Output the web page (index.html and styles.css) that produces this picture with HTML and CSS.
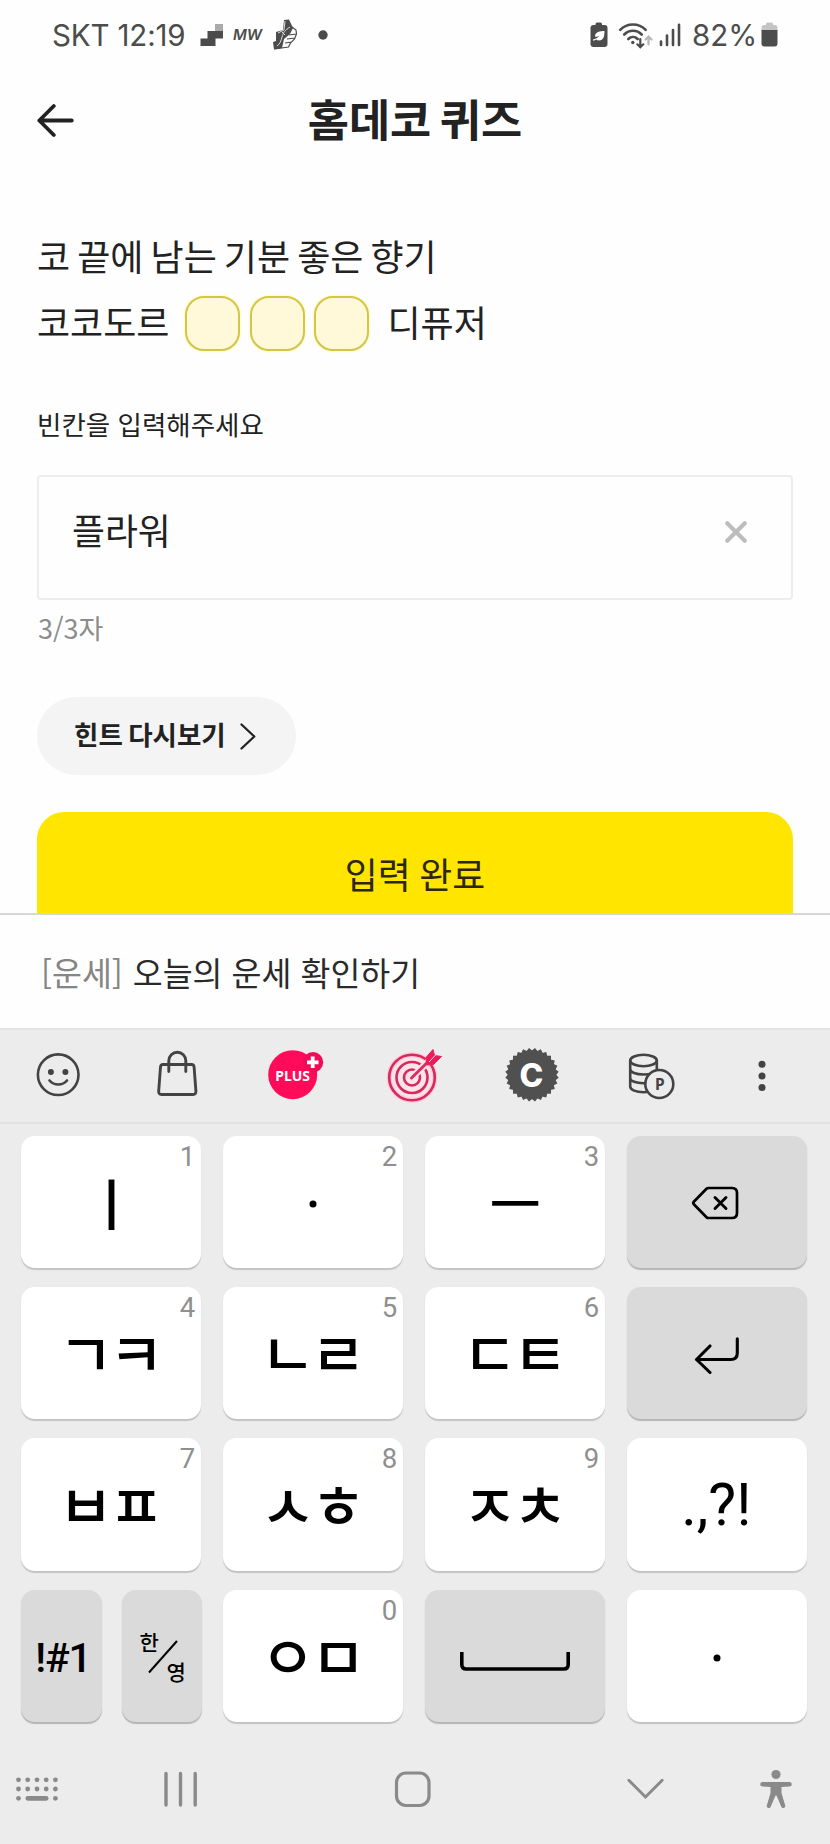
FILE: index.html
```html
<!DOCTYPE html>
<html lang="ko">
<head>
<meta charset="utf-8">
<title>홈데코 퀴즈</title>
<link rel="stylesheet" href="styles.css">
</head>
<body>
<div class="phone">
  <div class="status">
    <div class="status-left">
      <span class="carrier">SKT 12:19</span>
      <svg class="i-stairs" width="23" height="30" viewBox="0 0 23 30"><path fill="#aaa" d="M15 4h8v7h-8z"/><path fill="#4c4c4c" d="M7.500 11H23v7.500h-7.500V26H.5v-7.500h7z"/></svg>
      <span class="mw">MW</span>
      <svg class="i-shoe" width="26" height="32" viewBox="0 0 26 32"><path fill="#4c4c4c" d="M12 1l5-.5 4 8.500-3 6-6 5-2 9-8 1.500L1 23l3-1v-9l7-2z"/><path fill="none" stroke="#4c4c4c" stroke-width="1.200" d="M20 8l4 3 .5 4-2 5-4 4-2 4-14 2M17 16l7-1M15 20l8-1M13 24l7-1"/><path fill="none" stroke="#ddd" d="M18 8c-5 3-7 6-8 10s-2 7-5 9M13 2l-1 9-6 3M10 13l3 3"/></svg>
      <svg class="i-dot" width="10" height="10" viewBox="0 0 10 10"><circle cx="5" cy="5" r="4.700" fill="#4c4c4c"/></svg>
    </div>
    <div class="status-right">
      <svg class="i-saver" width="18" height="26" viewBox="0 0 18 26"><path fill="#4c4c4c" d="M5.500 3V2q0-1.500 1.500-1.500h3.500Q12 .5 12 2v1h2.500Q17.500 3 17.500 6v16q0 3-3 3H3.500q-3 0-3-3V6q0-3 3-3z"/><path fill="#fff" d="M5 14.500c0-4.500 5-5.500 9.500-5.500 0 5-.8 9.500-5.500 9.500-1.200 0-2-.4-2.600-.9-1 .7-2 1.200-3.400 1.200v-1.300c2.600-.4 4.600-1.600 6.400-3.500-1.500.6-3 1.200-4.400.5z"/></svg>
      <svg class="i-wifi" width="36" height="28" viewBox="0 0 36 28"><g fill="none" stroke="#4c4c4c" stroke-width="2.600" stroke-linecap="round"><path d="M2.200 8.800c7-7 18.500-7 25.500 0M6.200 13.500c5-5 12.500-5 17.500 0M10.300 18c2.700-2.700 6.700-2.700 9.400 0"/><path stroke-width="2.200" d="M22.300 18v8M19.300 23.300l3 3 3-3"/><path stroke="#b8b8b8" stroke-width="2.200" d="M30.500 23.500v-7M27.500 18.500l3-3 3 3"/></g><circle cx="14.800" cy="21.500" r="1.700" fill="#4c4c4c"/></svg>
      <svg class="i-signal" width="23" height="24" viewBox="0 0 23 24"><path fill="none" stroke="#4c4c4c" stroke-width="2.600" stroke-linecap="round" d="M2 22v-3.500M8 22V12.500M14 22V7M20 22V1.800"/></svg>
      <span class="percent">82%</span>
      <svg class="i-batt" width="17" height="25" viewBox="0 0 17 25"><path fill="#c4c4c4" d="M5 3V2Q5 .5 6.500.5h4Q12 .5 12 2v1h2q2.500 0 2.500 3v3H.5V6q0-3 2.500-3z"/><path fill="#4c4c4c" d="M.5 8h16v13.500q0 3-3 3h-10q-3 0-3-3z"/></svg>
    </div>
  </div>

  <header class="header">
    <svg class="back" width="38" height="36" viewBox="0 0 38 36"><path fill="none" stroke="#222" stroke-width="3.800" stroke-linecap="round" stroke-linejoin="round" d="M34.800 18.500H2.300M16.800 4L2.300 18.500 16.800 33"/></svg>
    <h1 class="title">홈데코 퀴즈</h1>
  </header>

  <main class="content">
    <div class="question">
      <div class="q-line"><span>코 끝에 남는 기분 좋은 향기</span></div>
      <div class="q-line">
        <span>코코도르</span>
        <span class="blanks"><i class="blank"></i><i class="blank"></i><i class="blank"></i></span>
        <span>디퓨저</span>
      </div>
    </div>
    <div class="label">빈칸을 입력해주세요</div>
    <div class="input">
      <span>플라워</span>
      <svg width="24" height="24" viewBox="0 0 24 24"><path fill="none" stroke="#bdbdbd" stroke-width="4.200" stroke-linecap="round" d="M3.200 3.200l17.600 17.600M20.800 3.200L3.200 20.800"/></svg>
    </div>
    <div class="count">3/3자</div>
    <div class="hint">
      <span>힌트 다시보기</span>
      <svg width="16" height="27" viewBox="0 0 16 27"><path fill="none" stroke="#222" stroke-width="2.300" stroke-linecap="round" stroke-linejoin="round" d="M1.500 1.500l12.800 12L1.500 25.500"/></svg>
    </div>
    <div class="submit">입력 완료</div>
  </main>

  <div class="suggest"><span class="tag">[운세]</span><span>오늘의 운세 확인하기</span></div>

  <div class="toolbar">
    <svg width="60" height="60" viewBox="0 0 60 60"><circle cx="30.200" cy="28.700" r="20.300" fill="none" stroke="#434343" stroke-width="2.600"/><circle cx="22.900" cy="26" r="3" fill="#434343"/><circle cx="37.400" cy="26" r="3" fill="#434343"/><path fill="none" stroke="#434343" stroke-width="2.600" stroke-linecap="round" d="M21.500 34.500c4.500 5.300 13 5.300 17.500 0"/></svg>
    <svg width="60" height="60" viewBox="0 0 60 60"><path fill="none" stroke="#434343" stroke-width="2.900" stroke-linecap="round" stroke-linejoin="round" d="M16 18.500h28.500q2.400 0 2.600 2.500l1.800 24q.2 3.500-2.800 3.500H14.500q-3 0-2.800-3.500l1.800-24q.2-2.500 2.500-2.500zM21.800 25.500V14.700a8.500 8.500 0 0 1 17 0v10.800"/></svg>
    <svg width="60" height="60" viewBox="0 0 60 60"><circle cx="27.700" cy="28.700" r="24.500" fill="#ff0b59"/><circle cx="48" cy="16.300" r="10.200" fill="#ec0f58"/><path stroke="#fff" stroke-width="3.800" d="M42 16.300h11.500M47.700 10.500V22"/><text class="plus-text" x="27.700" y="35" text-anchor="middle">PLUS</text></svg>
    <svg width="60" height="60" viewBox="0 0 60 60"><circle cx="28" cy="31.500" r="22.800" fill="#ffe3ea" stroke="#ffc9d8" stroke-width="5"/><g fill="none" stroke="#d42a5c" stroke-width="2.600" stroke-linecap="round"><circle cx="28" cy="31.500" r="22.800"/><circle cx="28" cy="31.500" r="15.500"/><circle cx="28" cy="31.500" r="8"/></g><path stroke="#ffe3ea" stroke-width="7" d="M31 28.500L50 10"/><path stroke="#db2d60" stroke-width="3" stroke-linecap="round" d="M27.500 32L50 10"/><path fill="#ee1b59" stroke="#ee1b59" stroke-linejoin="round" d="M42 11.500l7-8 1.500 6 7 1-8 8-7 .5z"/><path stroke="#ffdbe5" stroke-width="1" d="M45 16l7.500-8"/></svg>
    <svg width="60" height="60" viewBox="0 0 60 60"><g transform="translate(30 28.700)" fill="#505050"><rect x="-19" y="-19" width="38" height="38"/><rect x="-19" y="-19" width="38" height="38" transform="rotate(12.860)"/><rect x="-19" y="-19" width="38" height="38" transform="rotate(25.710)"/><rect x="-19" y="-19" width="38" height="38" transform="rotate(38.570)"/><rect x="-19" y="-19" width="38" height="38" transform="rotate(51.430)"/><rect x="-19" y="-19" width="38" height="38" transform="rotate(64.290)"/><rect x="-19" y="-19" width="38" height="38" transform="rotate(77.140)"/></g><text class="c-text" x="29.500" y="40.700" text-anchor="middle">C</text></svg>
    <svg width="60" height="60" viewBox="0 0 60 60"><g fill="none" stroke="#434343" stroke-width="2.600"><ellipse cx="22.500" cy="14.500" rx="13.300" ry="5.700"/><path d="M9.200 14.500v26c0 3.500 6 5.700 13.300 5.700q3 0 6-.7M35.800 14.500V25M9.200 23c0 3.500 6 5.500 13.300 5.500 6.500 0 12-1.600 13-4.500M9.200 32c0 3.300 6 5.200 13.300 5.200h3"/><circle cx="38.300" cy="38" r="14" fill="#ececec"/></g><text class="p-text" x="38.800" y="43.500" text-anchor="middle">P</text></svg>
    <svg width="46" height="60" viewBox="0 0 46 60"><g fill="#434343"><circle cx="23" cy="18.300" r="3.500"/><circle cx="23" cy="29.900" r="3.500"/><circle cx="23" cy="41.500" r="3.500"/></g></svg>
  </div>

  <div class="keys">
    <div class="key"><b>1</b><span class="vowel">ㅣ</span></div>
    <div class="key"><b>2</b><svg width="8" height="8" viewBox="0 0 8 8"><circle cx="4" cy="4" r="3.500"/></svg></div>
    <div class="key"><b>3</b><span class="vowel">ㅡ</span></div>
    <div class="key dark"><svg class="k-del" width="50" height="36" viewBox="0 0 50 36"><g fill="none" stroke="#000" stroke-width="2.700" stroke-linecap="round" stroke-linejoin="round"><path d="M18.500 3h23.500q5 0 5 5v20q0 5-5 5H18.500q-1.200 0-2-.8L3.800 19.200q-1.200-1.200 0-2.400L16.500 3.800q.8-.8 2-.8z"/><path stroke-width="2.900" d="M25 12.500l11 11M36 12.500l-11 11"/></g></svg></div>
    <div class="key"><b>4</b><span class="jamo">ㄱㅋ</span></div>
    <div class="key"><b>5</b><span class="jamo">ㄴㄹ</span></div>
    <div class="key"><b>6</b><span class="jamo">ㄷㅌ</span></div>
    <div class="key dark"><svg class="k-enter" width="48" height="38" viewBox="0 0 48 38"><path fill="none" stroke="#000" stroke-width="3.100" stroke-linecap="round" stroke-linejoin="round" d="M44.300 2.800V17q0 6.500-6.500 6.500H3.500M17 10L3.500 23.500 17 36.500"/></svg></div>
    <div class="key"><b>7</b><span class="jamo">ㅂㅍ</span></div>
    <div class="key"><b>8</b><span class="jamo">ㅅㅎ</span></div>
    <div class="key"><b>9</b><span class="jamo">ㅈㅊ</span></div>
    <div class="key"><span class="punct">.,?!</span></div>
    <div class="pair">
      <div class="key dark"><span class="sym">!#1</span></div>
      <div class="key dark"><svg class="k-lang" width="60" height="60" viewBox="0 0 60 60"><text class="lang-text" x="7.500" y="23.500">한</text><path stroke="#000" stroke-width="2" d="M17 46.500L45 15"/><text class="lang-text" x="34.500" y="54">영</text></svg></div>
    </div>
    <div class="key"><b>0</b><span class="jamo">ㅇㅁ</span></div>
    <div class="key dark"><svg class="k-space" width="112" height="20" viewBox="0 0 112 20"><path fill="none" stroke="#000" stroke-width="3.600" d="M2.800 1v12.500q0 4.500 4.500 4.500h97.400q4.500 0 4.500-4.500V1"/></svg></div>
    <div class="key"><svg width="8" height="8" viewBox="0 0 8 8"><circle cx="4" cy="4" r="3.500"/></svg></div>
  </div>

  <nav class="nav">
    <svg class="n1" width="46" height="44" viewBox="0 0 46 44"><g fill="#8a8a8a"><circle cx="4.500" cy="12.800" r="2.400"/><circle cx="13.700" cy="12.800" r="2.400"/><circle cx="23" cy="12.800" r="2.400"/><circle cx="32.200" cy="12.800" r="2.400"/><circle cx="41.400" cy="12.800" r="2.400"/><circle cx="4.500" cy="22" r="2.400"/><circle cx="13.700" cy="22" r="2.400"/><circle cx="23" cy="22" r="2.400"/><circle cx="32.200" cy="22" r="2.400"/><circle cx="41.400" cy="22" r="2.400"/><circle cx="4.500" cy="31.300" r="2.400"/><rect x="11.500" y="29" width="23" height="4.700" rx="2.350"/><circle cx="41.400" cy="31.300" r="2.400"/></g></svg>
    <svg class="n2" width="46" height="44" viewBox="0 0 46 44"><path stroke="#8a8a8a" stroke-width="3.400" stroke-linecap="round" d="M8 6.500v31.500M22.500 6.500v31.500M37.200 6.500v31.500"/></svg>
    <svg class="n3" width="46" height="44" viewBox="0 0 46 44"><rect x="6.500" y="6" width="32.500" height="32.500" rx="9.500" fill="none" stroke="#8a8a8a" stroke-width="3.200"/></svg>
    <svg class="n4" width="46" height="44" viewBox="0 0 46 44"><path fill="none" stroke="#8a8a8a" stroke-width="3" stroke-linecap="round" d="M6.800 13.300l16.700 16.700 16.700-16.700"/></svg>
    <svg class="n5" width="46" height="44" viewBox="0 0 46 44"><g fill="#8a8a8a"><circle cx="23" cy="7.500" r="4.600"/><path d="M9.500 15h27q2.300 0 2.300 2.200t-2.300 2.200L28.500 20v6l3.700 12.500q.5 2-1.400 2.500t-2.500-1.300L23.500 28.500h-1L17.700 39.700q-.6 1.800-2.500 1.300t-1.400-2.500L17.500 26v-6l-8-.6q-2.300 0-2.300-2.200T9.500 15z"/></g></svg>
  </nav>
</div>
</body>
</html>
```

FILE: styles.css
```css
* { box-sizing: border-box; }
body { margin: 0; background: #fefefe; }
svg { display: block; flex: none; }
.phone {
  width: 830px;
  height: 1844px;
  overflow: hidden;
  display: flex;
  flex-direction: column;
  background: #fefefe;
  color: #222;
  font-family: "Noto Sans CJK KR", sans-serif;
}

.status {
  height: 69px;
  padding: 0 52px 0 52px;
  display: flex;
  justify-content: space-between;
  align-items: center;
  color: #4c4c4c;
  font-family: Inter, sans-serif;
  font-size: 29.500px;
}
.status-left, .status-right { display: flex; align-items: center; white-space: nowrap; }
.carrier { width: 148px; letter-spacing: -0.150px; }
.mw { width: 39px; margin-left: 10px; font: italic 600 15px Inter, sans-serif; }
.i-dot { margin-left: 20px; }
.i-saver { margin-right: 10px; }
.i-wifi { margin-right: 5px; }
.i-signal { margin-right: 10px; }
.percent { width: 69px; letter-spacing: 0; }

.header { height: 101px; padding: 0 37px; display: grid; grid-template-columns: 38px 1fr 38px; align-items: center; }
.title { margin: 0; padding-bottom: 4px; font-size: 44.800px; font-weight: 700; line-height: 60px; text-align: center; word-spacing: -4px; }

.content { height: 743px; padding: 55px 37px 0; overflow: hidden; flex: none; }
.question { font-size: 36px; word-spacing: -3px; }
.q-line { height: 65.500px; line-height: 61.500px; display: flex; align-items: center; }
.q-line > span:not(.blanks) { padding-bottom: 4px; white-space: nowrap; }
.blanks { display: flex; gap: 9.500px; margin: 0 18px 0 16px; }
.blank { width: 55px; height: 55px; border: 2px solid #d3c548; border-radius: 19px; background: #fff9d9; box-shadow: 0 0 3px #fff58a; }
.label { margin-top: 48px; font-size: 26.500px; line-height: 40px; }
.input {
  margin-top: 31px;
  height: 125px;
  padding: 0 43px 14px 33px;
  border: 2px solid #ededed;
  border-radius: 4px;
  display: flex;
  justify-content: space-between;
  align-items: center;
  font-size: 35.800px;
  line-height: 50px;
}
.input span { padding-bottom: 3px; }
.input svg { margin-top: 3px; }
.count { margin-top: 8px; padding-left: 1px; height: 40px; font-size: 27px; line-height: 40px; color: #8c8c8c; }
.hint {
  margin-top: 49px;
  width: 259px;
  height: 78px;
  padding-left: 37px;
  border-radius: 39px;
  background: #f4f4f4;
  display: flex;
  align-items: center;
  gap: 14px;
  font-size: 26.500px;
  font-weight: 700;
  word-spacing: -2px;
}
.hint span { padding-bottom: 5px; }
.submit {
  margin-top: 37px;
  height: 126px;
  border-radius: 27px;
  background: #ffe500;
  color: #2c2708;
  font-size: 35.800px;
  line-height: 122px;
  text-align: center;
  word-spacing: -1.500px;
}

.suggest {
  height: 115px;
  flex: none;
  border-top: 2px solid #d6d6d6;
  padding-left: 41px;
  display: flex;
  align-items: center;
  gap: 10px;
  font-size: 32.500px;
  color: #2a2a2a;
}
.tag { color: #858585; }

.toolbar {
  height: 96px;
  flex: none;
  border-top: 2px solid #e2e2e2;
  border-bottom: 2px solid #e2e2e2;
  background: #ececec;
  padding-left: 28px;
  display: flex;
  align-items: center;
  gap: 58.500px;
}
.plus-text { font: 700 14px "Noto Sans", sans-serif; fill: #fff; }
.c-text { font: 800 32px Inter, sans-serif; fill: #fff; }
.p-text { font: 700 15.500px "Noto Sans", sans-serif; fill: #434343; }

.keys {
  height: 610px;
  flex: none;
  background: #ececec;
  padding: 12px 21px 0 21.300px;
  display: grid;
  grid-template-columns: repeat(4, 180px);
  grid-template-rows: 132px 132px 132.500px 132px;
  gap: 19.200px 22px;
  align-content: start;
}
.key {
  position: relative;
  display: flex;
  align-items: center;
  justify-content: center;
  border-radius: 14px;
  background: #fff;
  box-shadow: 0 2px 1px #c3c3c3;
  color: #000;
  line-height: 80px;
  white-space: nowrap;
}
.key b {
  position: absolute;
  top: 5px;
  right: 6px;
  font: 400 27.500px/32px Roboto, sans-serif;
  color: #8f8f8f;
}
.key > svg { margin-top: 4px; }
.vowel { font-size: 56px; font-weight: 500; padding-bottom: 3px; }
.jamo { font-size: 60px; font-weight: 500; letter-spacing: -4.600px; margin-right: -1px; padding: 0 6px 4px 0; }
.dark { background: #dadada; box-shadow: 0 2px 1px #b5b5b5; }
.key > .k-del { margin: 2px 5px 0 0; }
.key > .k-enter { margin-right: 1px; }
.key > .k-lang { margin-top: 0; }
.key > .k-space { margin-top: 9px; }
.pair { display: grid; grid-template-columns: 80.300px 80.300px; gap: 20.500px; }
.punct { font: 400 59px/80px Roboto, sans-serif; letter-spacing: 0; padding-right: 2px; }
.sym { font: 500 41px/60px Roboto, sans-serif; letter-spacing: -1.200px; padding: 4px 0 0 3px; }
.lang-text { font: 500 21px "Noto Sans CJK KR", sans-serif; }

.nav { flex: 1; background: #ececec; display: flex; align-items: flex-start; padding: 33px 0 0 14px; }
.n2 { margin-left: 98px; }
.n3 { margin-left: 186px; }
.n4 { margin-left: 186px; }
.n5 { margin-left: 85px; }
```
